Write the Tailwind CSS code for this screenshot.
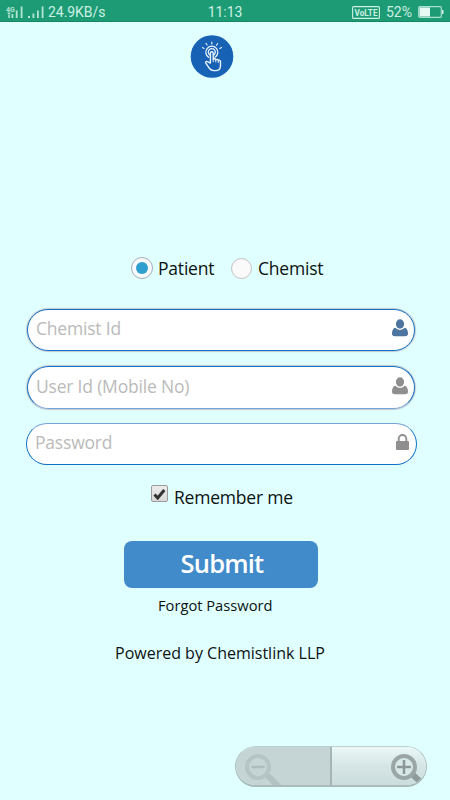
<!DOCTYPE html>
<html lang="en">
<head>
<meta charset="utf-8">
<title>Chemistlink Login</title>
<script src="https://cdn.jsdelivr.net/npm/@tailwindcss/browser@4"></script>
</head>
<body class="w-[450px] h-[800px] overflow-hidden bg-[#e0ffff] text-[#0c1212] font-['Open_Sans',sans-serif]">
<div class="flex flex-col h-[800px]">
  <header class="h-[22px] shrink-0 bg-[#1c9b74] border-b border-[#168762] grid grid-cols-3 items-center text-[#cdf0e3] font-[Roboto,sans-serif] text-[14px] leading-[24px]">
    <div class="flex items-center pl-[6px]">
      <svg class="w-[40px] h-[22px] shrink-0" viewBox="0 0 40 22" fill="#b4e4d3">
        <text x="0" y="10.5" font-size="7" font-weight="700" font-family="Roboto">4G</text>
        <path d="M1 11.500h4l-2 2.500zM2.300 14h1.500v3H2.300zM5.500 13h1.800v4H5.500zM9.800 9.500h1.800V17H9.800zM14.700 5.500h1.800V17h-1.800zM22 15h2v2h-2zM26.500 12.500h1.800V17h-1.800zM31 9.500h1.800V17H31zM35.700 5.500h1.800V17h-1.800z"/>
      </svg>
      <span class="ml-[2px] whitespace-nowrap tracking-[-0.05px]">24.9KB/s</span>
    </div>
    <div class="text-center tracking-[-0.1px]">11:13</div>
    <div class="flex items-center justify-end pr-[6px]">
      <svg class="w-[28px] h-[13px] overflow-visible" viewBox="0 0 28 13"><rect x=".6" y=".6" width="26.800" height="11.800" rx="1" fill="none" stroke="#cdf0e3" stroke-width="1.100"/><text x="2.500" y="10" font-size="9.500" font-weight="700" font-family="Roboto" fill="#cdf0e3" textLength="23" lengthAdjust="spacingAndGlyphs">VoLTE</text></svg>
      <span class="ml-[6px] text-[14px]">52%</span>
      <svg class="ml-[6px] w-[26px] h-[12px]" viewBox="0 0 26 12"><rect x=".7" y=".7" width="22.600" height="10.600" rx="1" fill="none" stroke="#a9dfcc" stroke-width="1.200"/><path d="M1.500 1.500H12v9H1.500z" fill="#e6f9f2"/><path d="M24 4h1.500v4H24z" fill="#cdf0e3"/></svg>
    </div>
  </header>

  <main class="flex flex-col">
    <svg class="mt-[13px] ml-[190px] w-[44px] h-[44px]" viewBox="0 0 44 44" fill="none" stroke="#eaf4ff" stroke-linecap="round" stroke-linejoin="round">
      <circle cx="22" cy="21.500" r="21.300" fill="#1862b5" stroke="none"/>
      <path stroke-width="1.100" d="M12.500 12.600l1.500.8M16 8.400l1.200 1.600M21.800 7v2M27.700 8.500l-1.300 1.800M31.500 12.600l-1.700.9"/>
      <path stroke-width="1.300" d="M18.600 22.300a6 6 0 1 1 6.400 0"/>
      <path stroke-width="1.300" d="M19.500 19.700a3.500 3.500 0 1 1 4.600 0"/>
      <path stroke-width="1.400" fill="#1862b5" d="M20.400 28V18.100a1.400 1.400 0 0 1 2.800 0v6.200c.5-.9 2.400-.7 2.600.5.7-.8 2.300-.5 2.500.6.900-.6 2.200-.1 2.200 1.200v3.800c0 3.200-2 5.200-5 5.200h-1.600c-2.300 0-4-1.200-5.200-3.200l-2.900-4.300c-.7-1.400.9-2.300 2-1.300z"/>
      <path stroke-width="1" d="M23.200 24.500v2.200M25.800 25v2M28.300 26v1.600"/>
    </svg>

    <div class="mt-[177px] ml-[131px] h-[24px] flex items-center text-[17.5px] leading-[24px] tracking-[-0.2px]">
      <span class="w-[22px] h-[22px] rounded-full border border-[#a7adb8] bg-[#f7fafc] flex items-center justify-center"><span class="w-[12px] h-[12px] rounded-full bg-[#2f9fcf]"></span></span>
      <span class="ml-[5px] w-[73px]">Patient</span>
      <span class="w-[21px] h-[21px] rounded-full border border-[#c3c0c2] bg-[#fafafa]"></span>
      <span class="ml-[6px]">Chemist</span>
    </div>

    <div class="mt-[29px] ml-[27px] w-[388px] h-[42px] rounded-full border border-[#1673c4] bg-white shadow-[0_0_1px_1px_#c3c9cf] flex items-center pl-[8px] pr-[6px] text-[17.5px] tracking-[-0.2px] text-[#bababa]">
      <span class="flex-1 pb-[3px]">Chemist Id</span>
      <svg class="w-[16px] h-[18px] mb-[4px]" viewBox="0 0 16 18" fill="#4c759f"><ellipse cx="8" cy="5" rx="4.100" ry="4.700"/><path d="M3.500 8.700C1 9 0 11.500 0 14.500 0 16.300 1 17.300 2.800 17.300h10.400c1.800 0 2.800-1 2.800-2.800C16 11.500 15 9 12.500 8.700 11.300 10.100 9.800 10.900 8 10.900S4.700 10.100 3.500 8.700z"/></svg>
    </div>
    <div class="mt-[15px] ml-[27px] w-[388px] h-[43px] rounded-full border border-[#1673c4] border-b-[#76a3d8] bg-white shadow-[0_0_1px_1px_#c3c9cf] flex items-center pl-[8px] pr-[6px] text-[17.5px] tracking-[-0.2px] text-[#bababa]">
      <span class="flex-1 pb-[3px]">User Id (Mobile No)</span>
      <svg class="w-[16px] h-[18px] mb-[4px]" viewBox="0 0 16 18" fill="#8f8f8f"><ellipse cx="8" cy="5" rx="4.100" ry="4.700"/><path d="M3.500 8.700C1 9 0 11.500 0 14.500 0 16.300 1 17.300 2.800 17.300h10.400c1.800 0 2.800-1 2.800-2.800C16 11.500 15 9 12.500 8.700 11.300 10.100 9.800 10.900 8 10.900S4.700 10.100 3.500 8.700z"/></svg>
    </div>
    <div class="mt-[14px] ml-[26px] w-[391px] h-[42px] rounded-full border border-[#1272c6] border-t-[#76a3d8] bg-white flex items-center pl-[8px] pr-[7px] text-[17.5px] tracking-[-0.2px] text-[#bababa]">
      <span class="flex-1 pb-[3px]">Password</span>
      <svg class="w-[13px] h-[16px] mb-[4px]" viewBox="0 0 13 16"><path d="M2.700 8V4.800a3.800 3.800 0 0 1 7.600 0V8" fill="none" stroke="#8f8f8f" stroke-width="1.900"/><rect y="7" width="13" height="9" rx="1" fill="#8f8f8f"/></svg>
    </div>

    <div class="mt-[19px] ml-[151px] h-[26px] flex items-start">
      <span class="mt-px w-[17px] h-[17px] rounded-[2px] border border-[#9b9b9b] bg-linear-to-b from-[#ececec] to-[#d9d9d9] flex items-center justify-center">
        <svg class="w-[13px] h-[12px]" viewBox="0 0 13 12"><path d="M1.500 6.500l3.200 3.500L11.300 2" fill="none" stroke="#333" stroke-width="3"/></svg>
      </span>
      <span class="ml-[6px] text-[17.5px] leading-[26px] tracking-[-0.2px]">Remember me</span>
    </div>

    <button class="mt-[31px] ml-[124px] w-[194px] h-[47px] rounded-[8px] bg-[#428bca] text-white text-[25.5px] font-semibold tracking-[-0.8px] leading-[45px] pb-[2px] pl-[2px]">Submit</button>
    <a class="mt-[7px] ml-[158px] text-[14.7px] leading-[20px]">Forgot Password</a>
    <div class="mt-[26px] ml-[115px] text-[16px] leading-[24px]">Powered by Chemistlink LLP</div>
  </main>

  <div class="mt-[81px] ml-[235px] w-[192px] h-[41px] shrink-0 rounded-full border border-[#aabbbb] border-t-[#c0d0d0] border-b-2 overflow-hidden flex">
    <div class="w-[96px] bg-[#c5d5d5] border-r-2 border-[#a5b5b5]">
      <svg class="w-[94px] h-[39px]" viewBox="0 0 94 39" fill="none"><path d="M30 27l14 14" stroke="#b2c1c1" stroke-width="6"/><circle cx="22" cy="20" r="11" stroke="#b5c4c4" stroke-width="4"/><path d="M15.500 20h13" stroke="#aebdbd" stroke-width="2.500"/></svg>
    </div>
    <div class="flex-1 bg-linear-to-b from-[#e9f7f7] via-[#d6e5e5] to-[#cbdddd]">
      <svg class="w-[94px] h-[39px]" viewBox="0 0 94 39" fill="none"><path d="M80 27l14 13" stroke="#8f9b9b" stroke-width="6"/><circle cx="72" cy="20" r="11" fill="#d8e8e8" stroke="#9aa6a6" stroke-width="4"/><path d="M65 20h14M72 13v14" stroke="#8b9696" stroke-width="2.500"/></svg>
    </div>
  </div>
</div>
</body>
</html>
